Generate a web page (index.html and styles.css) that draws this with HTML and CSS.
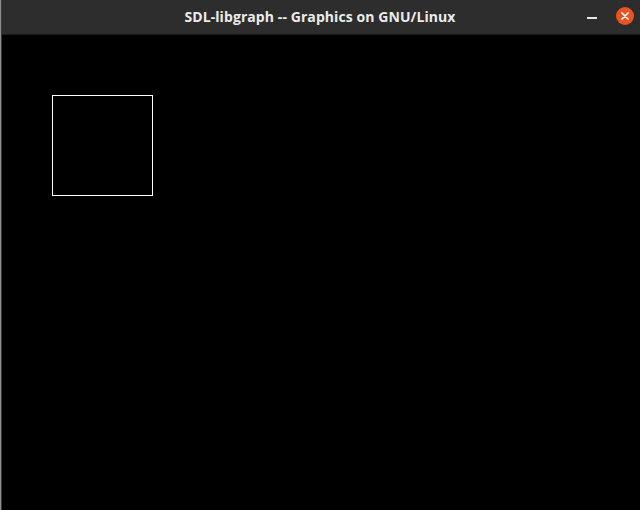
FILE: index.html
```html
<!DOCTYPE html>
<html>
<head>
<meta charset="utf-8">
<link rel="stylesheet" href="styles.css">
<title>SDL-libgraph</title>
</head>
<body>
<div class="window">
  <div class="edge"></div>
  <div class="main">
    <div class="titlebar">
      <div class="title">SDL-libgraph -- Graphics on GNU/Linux</div>
      <div class="controls">
        <div class="minimize"></div>
        <div class="close">
          <svg width="18" height="18" viewBox="0 0 18 18">
            <circle cx="9" cy="9" r="9" fill="#e95420"/>
            <path d="M5.8 5.8 L12.2 12.2 M12.2 5.8 L5.8 12.2" stroke="#ffffff" stroke-width="1.6" stroke-linecap="round"/>
          </svg>
        </div>
      </div>
    </div>
    <div class="canvas">
      <div class="square"></div>
    </div>
  </div>
</div>
</body>
</html>
```
FILE: styles.css
```css
html, body {
  margin: 0;
  padding: 0;
  width: 640px;
  height: 510px;
  overflow: hidden;
  background: #000;
}
.window {
  display: flex;
  width: 640px;
  height: 510px;
}
.edge {
  width: 1px;
  background: #8e8e8e;
  border-right: 1px solid #3a3a3a;
  flex: none;
}
.main {
  flex: 1;
  display: flex;
  flex-direction: column;
}
.titlebar {
  height: 34px;
  background: #2d2d2d;
  border-bottom: 1px solid #1a1a1a;
  display: flex;
  align-items: center;
  justify-content: center;
  position: relative;
  flex: none;
}
.title {
  font-family: "Open Sans", "DejaVu Sans", sans-serif;
  font-weight: 700;
  font-size: 14px;
  letter-spacing: 0.08px;
  color: #ebebeb;
  margin-left: -2px;
  margin-top: -1px;
}
.controls {
  position: absolute;
  right: 6px;
  top: 7px;
  display: flex;
  align-items: center;
  gap: 19px;
}
.minimize {
  width: 10px;
  height: 2px;
  background: #e6e6e6;
  margin-top: 4px;
}
.close {
  width: 18px;
  height: 18px;
  display: flex;
}
.canvas {
  flex: 1;
  background: #000;
  padding: 60px 0 0 50px;
}
.square {
  width: 99px;
  height: 99px;
  border: 1px solid #ffffff;
}
```
